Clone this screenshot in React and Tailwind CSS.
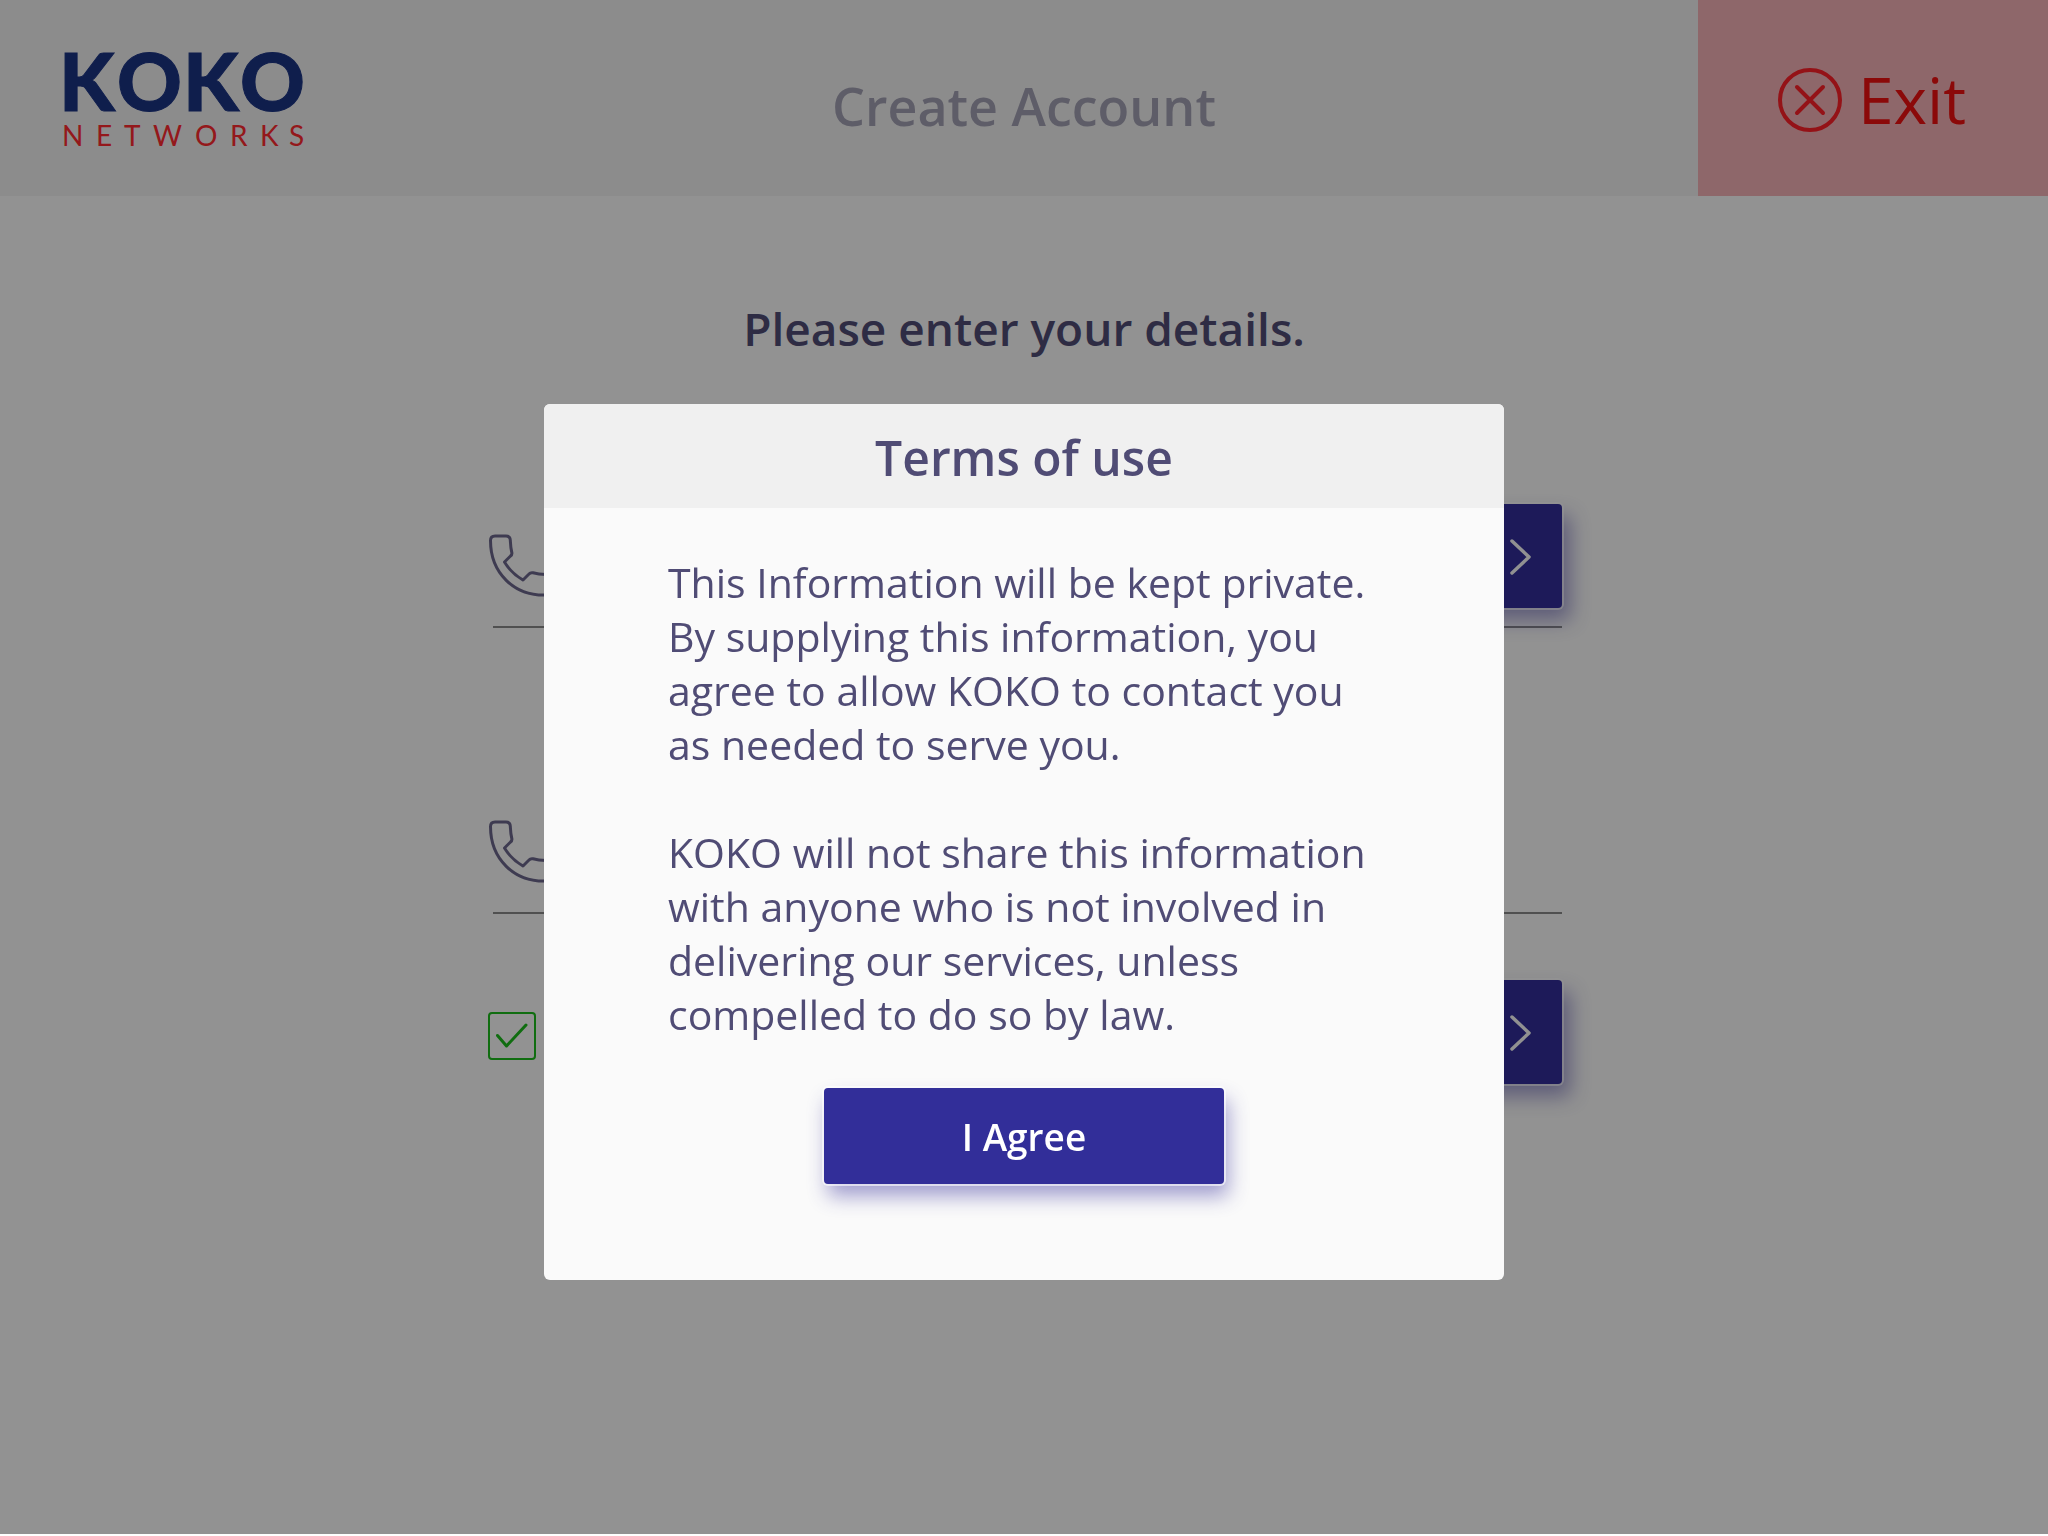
import React, { useState } from "react";

function Logo() {
  return (
    <svg className="ml-14 h-[150px] w-[264px]" viewBox="0 0 264 150" role="img" aria-label="KOKO Networks">
      <text x="3 61 127 184" y="88" fill="#1b3484" stroke="#1b3484" strokeWidth="1" fontFamily="Lato" fontWeight="900" fontSize="80">KOKO</text>
      <text x="6 40 68 97 139 174 204 233" y="123" fill="#ff2a30" fontFamily="Lato" fontSize="28">NETWORKS</text>
    </svg>
  );
}

function PhoneIcon() {
  return (
    <svg className="size-16" viewBox="0 0 64 64" fill="none" stroke="#6c678c" strokeWidth="3" strokeLinejoin="round" aria-hidden="true">
      <path d="M6 2 H17 Q21 2 21.300 6 C21.500 10 21.600 14 22.800 18.500 Q23.300 20.500 21.500 22 L15.500 28 Q22 39 34 46 L40 40 Q41.500 38.300 44 38.800 C48 40 53 40.500 57 40.600 Q61.500 41 61.500 45 V56 Q61.500 61 57 61 C25 62 1.500 39 1.500 6.500 Q1.500 2 6 2 Z" />
    </svg>
  );
}

function ChevronButton({ label }) {
  return (
    <button
      type="button"
      aria-label={label}
      className="flex h-[104px] w-32 items-center justify-end rounded-[4px] bg-[#322e99] pt-0.5 pr-[30px] shadow-[0_0_0_2px_rgba(255,255,255,0.6),8px_12px_20px_rgba(50,45,153,0.45)]"
    >
      <svg className="h-9 w-6" viewBox="0 0 24 36" fill="none" stroke="#fafafa" strokeWidth="3.500" strokeLinecap="round" strokeLinejoin="round" aria-hidden="true">
        <path d="M4 2 L21 18 L4 34" />
      </svg>
    </button>
  );
}

function PhoneField({ label, children }) {
  return (
    <div className="border-b-2 border-transparent">
      <div className="flex h-[122px] items-start justify-between">
        <label className="flex grow items-start gap-6 pt-[30px] pl-[3px]">
          <PhoneIcon />
          <input type="tel" aria-label={label} className="h-16 min-w-0 grow bg-transparent text-[40px] text-[#504c75] outline-none" />
        </label>
        {children}
      </div>
      <hr className="ml-[7px] border-t-2 border-[#8a8a8a]" />
    </div>
  );
}

function TermsDialog({ onAgree }) {
  return (
    <div className="fixed inset-x-0 top-0 bottom-0.5 flex items-start justify-center bg-black/42 pt-[404px]">
      <section role="dialog" aria-modal="true" aria-labelledby="terms-title" className="w-[960px] max-w-full overflow-hidden rounded-[6px] bg-[#fafafa] pb-24 text-[#504c75]">
        <h2 id="terms-title" className="bg-[#f0f0f0] pt-[21px] pb-[17px] text-center text-[48px] leading-[66px] font-semibold">Terms of use</h2>
        <div className="space-y-[54px] px-[124px] pt-[47px] text-[41px] leading-[54px]">
          <p>
            This Information will be kept private.<br />
            By supplying this information, you<br />
            agree to allow KOKO to contact you<br />
            as needed to serve you.
          </p>
          <p>
            KOKO will not share this information<br />
            with anyone who is not involved in<br />
            delivering our services, unless<br />
            compelled to do so by law.
          </p>
        </div>
        <button
          type="button"
          onClick={onAgree}
          className="mx-auto mt-[47px] block h-24 w-[400px] rounded-[4px] bg-[#322e99] pt-0.5 text-[37px] font-semibold text-white shadow-[0_0_0_2px_rgba(255,255,255,0.6),4px_12px_20px_rgba(50,45,153,0.45)]"
        >
          I Agree
        </button>
      </section>
    </div>
  );
}

export default function App() {
  const [open, setOpen] = useState(true);
  const [accepted, setAccepted] = useState(true);
  return (
    <div className="min-h-screen border-b-2 border-white bg-[#fbfbfb] font-['Open_Sans',sans-serif] text-[#504c75]">
      <header className="grid h-[196px] grid-cols-[1fr_auto_1fr] items-center bg-[#f2f2f2]">
        <Logo />
        <h1 className="pt-4 text-[52px] font-semibold text-[#a3a1b3]">Create Account</h1>
        <button type="button" className="flex h-full w-[350px] items-center justify-center gap-4 justify-self-end bg-[#f5b2b7] pt-1 pr-0.5 text-[64px] text-[#f01010]">
          <svg className="size-16" viewBox="0 0 64 64" fill="none" stroke="#ff2028" strokeWidth="4" strokeLinecap="round" aria-hidden="true">
            <circle cx="32" cy="32" r="30" />
            <path d="M19 19 L45 45 M45 19 L19 45" />
          </svg>
          Exit
        </button>
      </header>
      <main>
        <h2 className="pt-[99px] text-center text-[46px] leading-[66px] font-semibold">Please enter your details.</h2>
        <form className="mx-auto mt-[143px] w-[1076px] max-w-full" onSubmit={(e) => e.preventDefault()}>
          <PhoneField label="Phone number">
            <ChevronButton label="Submit phone number" />
          </PhoneField>
          <div className="mt-40">
            <PhoneField label="Confirm phone number" />
          </div>
          <div className="mt-16 flex items-start justify-between pl-0.5">
            <label className="relative mt-8 size-12">
              <input type="checkbox" aria-label="Accept the terms of use" checked={accepted} onChange={(e) => setAccepted(e.target.checked)} className="block size-12 appearance-none rounded-[4px] border-2 border-[#1cbc1c]" />
              {accepted && (
                <svg className="pointer-events-none absolute inset-0" viewBox="0 0 48 48" fill="none" stroke="#1cbc1c" strokeWidth="3" strokeLinecap="round" strokeLinejoin="round" aria-hidden="true">
                  <path d="M9.500 23.500 L18.500 34 L38 13" />
                </svg>
              )}
            </label>
            <ChevronButton label="Continue" />
          </div>
        </form>
      </main>
      {open && <TermsDialog onAgree={() => setOpen(false)} />}
    </div>
  );
}
